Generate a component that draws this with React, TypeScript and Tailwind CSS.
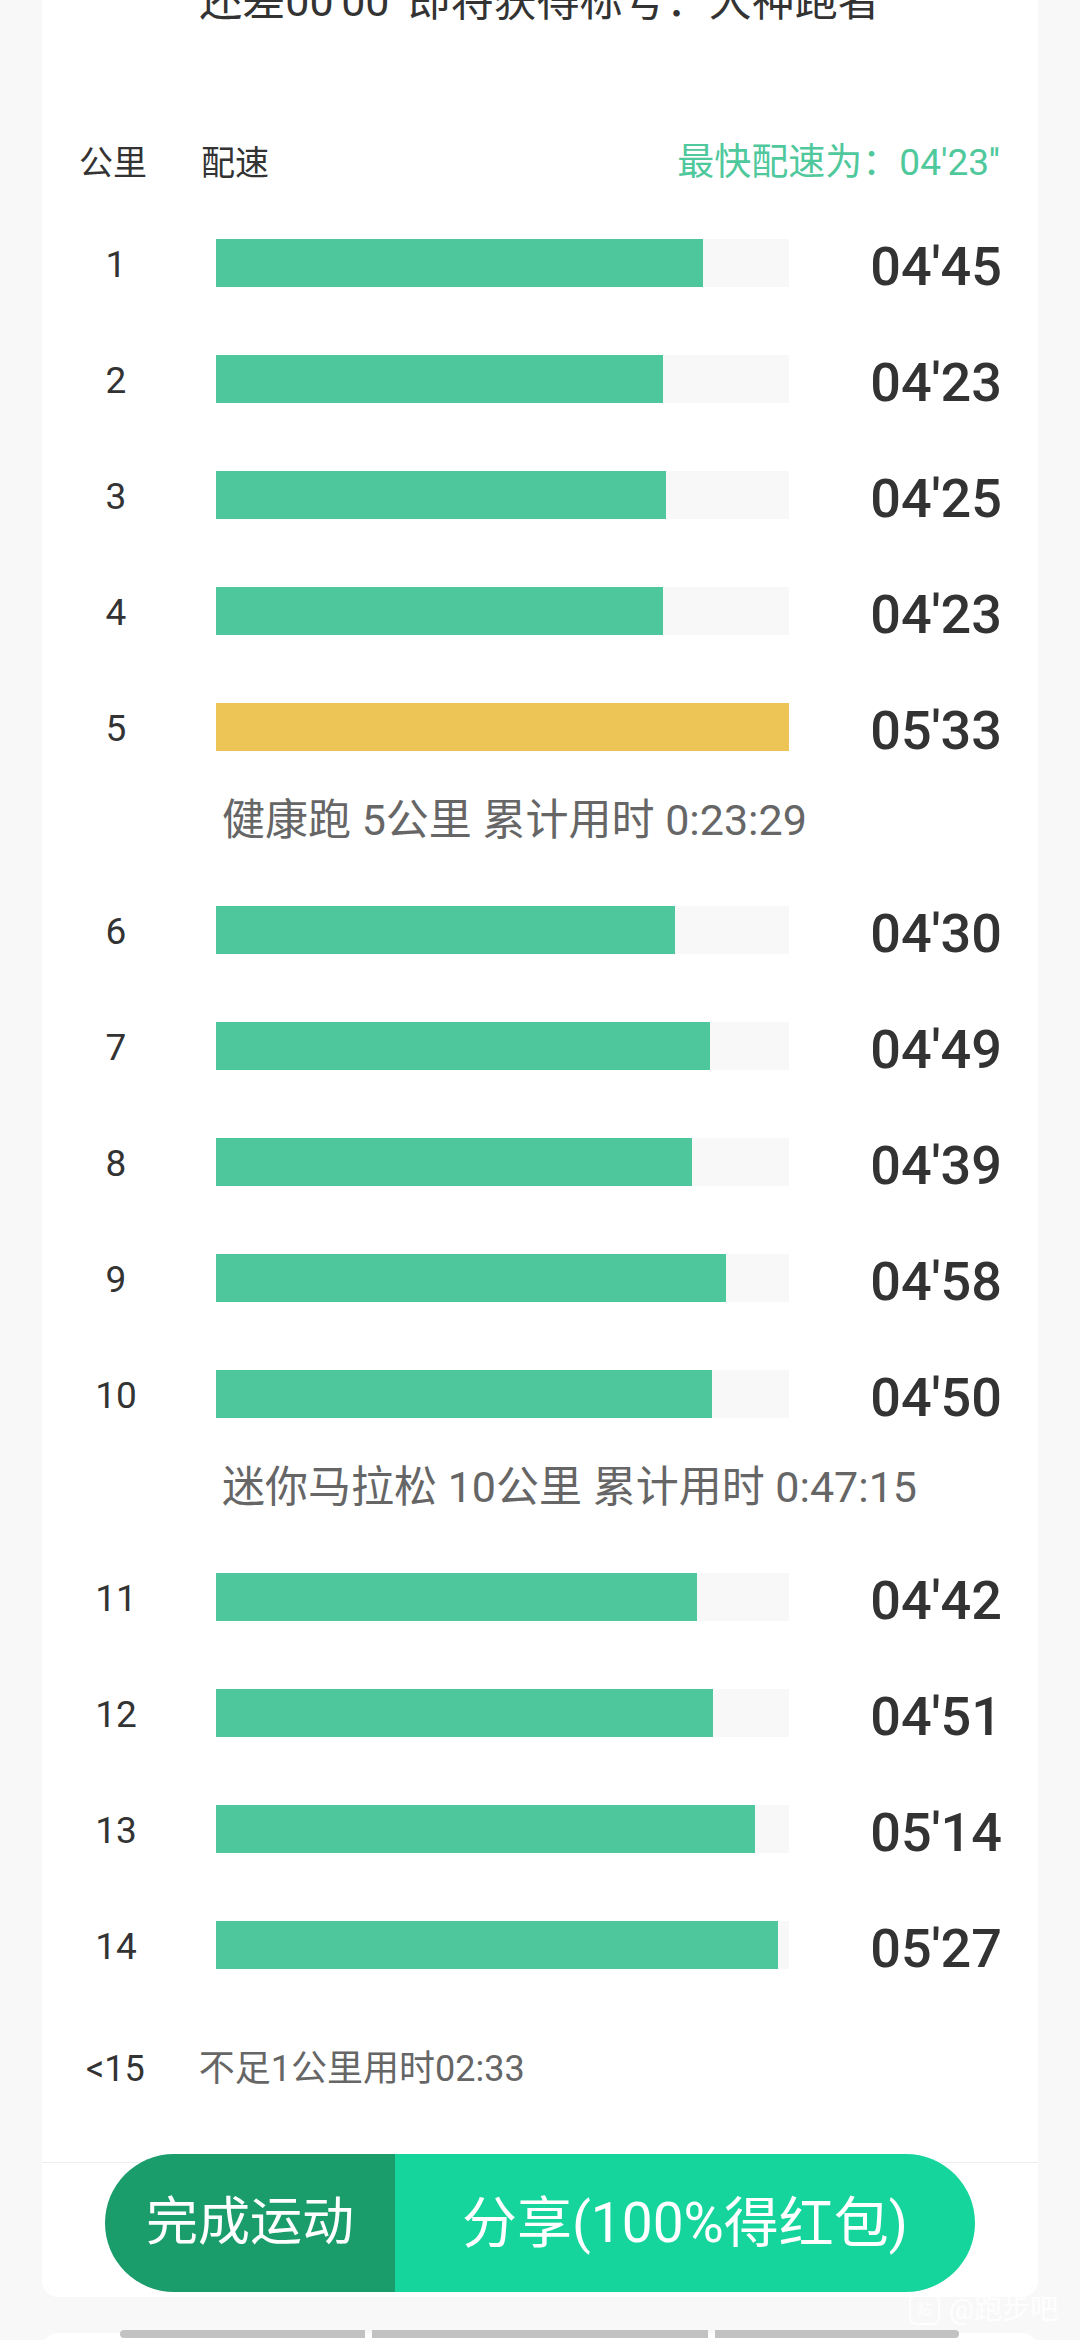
import React from "react";

type Split = { km: number; pace: string };

const MAX_SEC = 333;

const toSec = (pace: string) => {
  const [m, s] = pace.split("'");
  return Number(m) * 60 + Number(s);
};

const groups: { rows: Split[]; note?: string }[] = [
  {
    rows: [
      { km: 1, pace: "04'45" },
      { km: 2, pace: "04'23" },
      { km: 3, pace: "04'25" },
      { km: 4, pace: "04'23" },
      { km: 5, pace: "05'33" },
    ],
    note: "健康跑 5公里 累计用时 0:23:29",
  },
  {
    rows: [
      { km: 6, pace: "04'30" },
      { km: 7, pace: "04'49" },
      { km: 8, pace: "04'39" },
      { km: 9, pace: "04'58" },
      { km: 10, pace: "04'50" },
    ],
    note: "迷你马拉松 10公里 累计用时 0:47:15",
  },
  {
    rows: [
      { km: 11, pace: "04'42" },
      { km: 12, pace: "04'51" },
      { km: 13, pace: "05'14" },
      { km: 14, pace: "05'27" },
    ],
  },
];

const Row = ({ item }: { item: Split }) => {
  const sec = toSec(item.pace);
  const pct = ((sec - 15) / (MAX_SEC - 15)) * 100;
  const slowest = sec === MAX_SEC;
  return (
    <div className="flex h-[116px] items-center">
      <div className="w-[148px] pt-[2px] text-center text-[37px] leading-none text-[#333]">
        {item.km}
      </div>
      <div className="ml-[26px] h-[48px] w-[573px] bg-[#f8f8f8]">
        <div
          className={`h-full ${slowest ? "bg-[#ecc556]" : "bg-[#4fc79c]"}`}
          style={{ width: `${Math.min(pct, 100)}%` }}
        />
      </div>
      <div className="ml-auto pr-[36px] pt-[7px] text-[54px] font-medium leading-none text-[#333]">
        {item.pace}
      </div>
    </div>
  );
};

const App = () => {
  return (
    <div className="relative h-[2340px] w-[1080px] overflow-hidden bg-[#f8f8f8] font-['Roboto','Noto_Sans_CJK_SC',sans-serif]">
      <div className="mx-[42px] w-[996px] rounded-b-[16px] bg-white">
        <p className="-mt-[20px] h-[42px] text-center text-[43px] leading-[42px] text-[#333]">
          还差00'00' 即将获得标号：大神跑者
        </p>

        <div className="mt-[109px] flex h-[64px] items-center text-[34px] text-[#333]">
          <span className="ml-[37px]">公里</span>
          <span className="ml-[54px]">配速</span>
          <span className="ml-auto pr-[38px] text-[37px] text-[#4fc89c]">
            最快配速为：04'23''
          </span>
        </div>

        <div className="mt-[10px]">
          {groups.map((g, i) => (
            <div key={i}>
              {g.rows.map((r) => (
                <Row key={r.km} item={r} />
              ))}
              {g.note && (
                <div className="h-[87px] pl-[180px] pt-[15px] text-[43px] leading-[40px] text-[#666]">
                  {g.note}
                </div>
              )}
            </div>
          ))}
        </div>

        <div className="flex h-[132px] items-center text-[36px]">
          <span className="ml-[44px] text-[#333]">&lt;15</span>
          <span className="ml-[54px] text-[#666]">不足1公里用时02:33</span>
        </div>

        <div className="mt-[27px] h-[135px] border-t border-[#eeeeee]">
          <div className="-mt-[9px] ml-[63px] flex h-[138px] w-[870px] overflow-hidden rounded-full text-white">
            <button className="flex w-[290px] items-center justify-center bg-[#1b9c6b] text-[52px]">
              完成运动
            </button>
            <button className="flex flex-1 items-center justify-center bg-[#15d59d] text-[55px]">
              分享(100%得红包)
            </button>
          </div>
        </div>
      </div>

      <div className="relative mx-[42px] mt-[36px] h-[40px] w-[996px] rounded-t-[16px] bg-white">
        <div className="absolute -top-[3px] left-[78px] flex h-[8px] gap-[7px]">
          <div className="w-[245px] rounded-l-full bg-[#c2c2c2]" />
          <div className="w-[336px] bg-[#c2c2c2]" />
          <div className="w-[244px] rounded-r-full bg-[#c2c2c2]" />
        </div>
      </div>

      <div className="absolute left-[909px] top-[2294px] flex items-center gap-[9px] text-white/80">
        <div className="flex h-[31px] w-[31px] items-center justify-center rounded-[7px] border-2 border-white/80 text-[15px] leading-none">
          贴
        </div>
        <span className="text-[28px] leading-none">@跑步吧</span>
      </div>
    </div>
  );
};

export default App;
